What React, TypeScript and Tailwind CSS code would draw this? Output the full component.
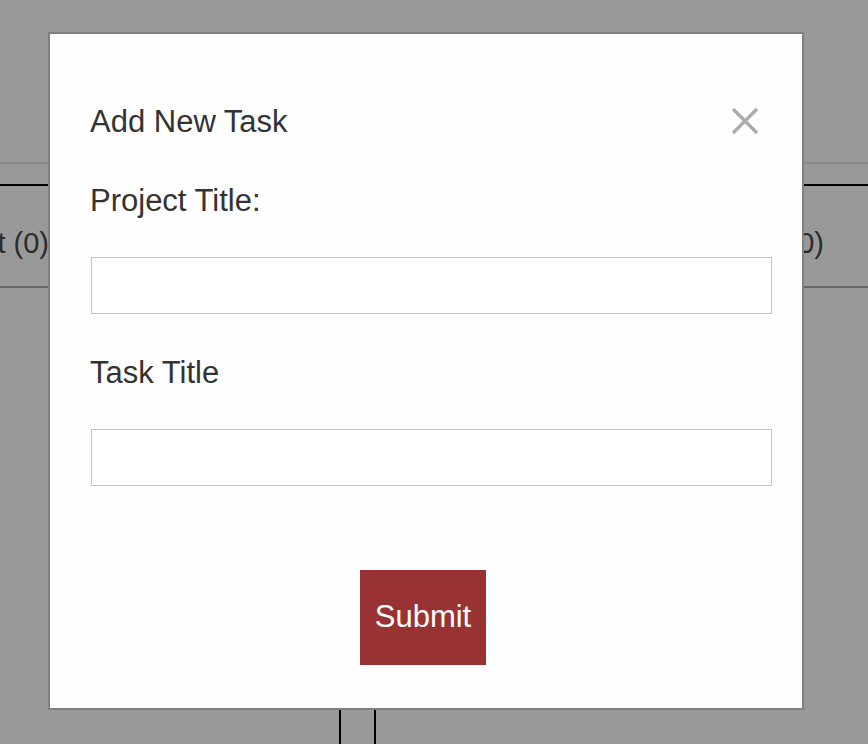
import React from "react";

export default function App() {
  const font = { fontFamily: '"Liberation Sans", Arial, Helvetica, sans-serif' };
  return (
    <div className="relative w-[868px] h-[744px] overflow-hidden bg-[#999999]" style={font}>
      {/* background page (under overlay) */}
      <div className="flex flex-col h-full">
        <div className="h-[162px] shrink-0" />
        <div className="h-[2px] bg-[#8a8a8a] shrink-0" />
        <div className="h-[20px] shrink-0" />
        <div className="h-[2px] bg-black shrink-0" />
        <div className="h-[100px] shrink-0 flex items-center pt-[16px] text-[29px] text-[#2b2b2b]">
          <div className="w-[49px] flex justify-end overflow-hidden whitespace-nowrap">
            <span>In Project (0)</span>
          </div>
          <div className="flex-1" />
          <div className="w-[140px] mr-[44px] flex justify-end whitespace-nowrap">
            <span>Done (0)</span>
          </div>
        </div>
        <div className="h-[2px] bg-[#666666] shrink-0" />
        <div className="flex-1 flex">
          <div className="w-[339px]" />
          <div className="w-[2px] bg-black" />
          <div className="w-[33px]" />
          <div className="w-[2px] bg-black" />
        </div>
      </div>

      {/* modal */}
      <div className="absolute left-[48px] top-[32px] w-[756px] h-[678px] border-2 border-[#808080] bg-[#fefefe]">
        <div className="flex flex-col pl-[40px] pr-[29px] pt-[70px] text-[#333333]">
          <div className="flex items-center justify-between h-[36px]">
            <h2 className="text-[31px] leading-[36px] font-normal">Add New Task</h2>
            <button className="w-[28px] h-[28px] mr-[14px] -mt-[2px] flex items-center justify-center">
              <svg width="28" height="28" viewBox="0 0 28 28">
                <path d="M2 2 L26 26 M26 2 L2 26" stroke="#aaaaaa" strokeWidth="3.2" />
              </svg>
            </button>
          </div>
          <label className="mt-[43px] text-[31px] leading-[36px]">Project Title:</label>
          <input className="mt-[38px] ml-[1px] h-[57px] w-[681px] border border-[#c4c4c4] bg-white outline-none px-3 text-[20px]" />
          <label className="mt-[41px] text-[31px] leading-[36px]">Task Title</label>
          <input className="mt-[38px] ml-[1px] h-[57px] w-[681px] border border-[#c4c4c4] bg-white outline-none px-3 text-[20px]" />
          <div className="mt-[84px] flex pl-[270px]">
            <button className="w-[126px] h-[95px] bg-[#993333] text-white text-[31px] flex items-center justify-center">
              Submit
            </button>
          </div>
        </div>
      </div>
    </div>
  );
}
